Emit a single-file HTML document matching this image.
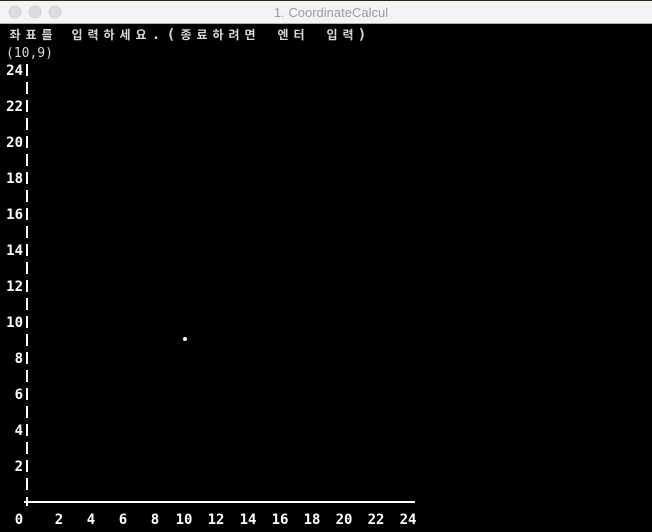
<html><head><style>
body{margin:0;width:652px;height:532px;overflow:hidden;background:#000}
svg{display:block}
</style></head><body>
<svg width="652" height="532" xmlns="http://www.w3.org/2000/svg">
<rect x="0" y="0" width="652" height="532" fill="#000"/>
<rect x="0" y="0" width="652" height="2" fill="#2a2a1a"/>
<rect x="0" y="1" width="652" height="22" fill="#f4f4f4"/>
<rect x="0" y="23" width="652" height="1" fill="#b0b0b0"/>
<circle cx="15" cy="12" r="6" fill="#dcdcdc" stroke="#cacaca" stroke-width="0.8"/>
<circle cx="35" cy="12" r="6" fill="#dcdcdc" stroke="#cacaca" stroke-width="0.8"/>
<circle cx="55" cy="12" r="6" fill="#dcdcdc" stroke="#cacaca" stroke-width="0.8"/>
<text x="331" y="17" font-family="Liberation Sans, sans-serif" font-size="13" fill="#9a9a9a" text-anchor="middle">1. CoordinateCalcul</text>
<g font-family="'DejaVu Sans Mono', 'Noto Sans CJK KR', sans-serif" font-size="12" font-weight="bold" fill="#d8d8d8" text-anchor="middle">
<text x="15" y="39">좌</text><text x="31" y="39">표</text><text x="47" y="39">를</text>
<text x="77" y="39">입</text><text x="93" y="39">력</text><text x="109" y="39">하</text><text x="125" y="39">세</text><text x="141" y="39">요</text><text x="156" y="39" font-size="14">.</text>
<text x="171" y="39" font-size="14">(</text><text x="186" y="39">종</text><text x="202" y="39">료</text><text x="218" y="39">하</text><text x="234" y="39">려</text><text x="250" y="39">면</text>
<text x="283" y="39">엔</text><text x="299" y="39">터</text><text x="332" y="39">입</text><text x="348" y="39">력</text><text x="362" y="39" font-size="14">)</text>
</g>
<text x="6" y="57" font-family="DejaVu Sans Mono, monospace" font-size="13" fill="#d8d8d8">(10,9)</text>
<g fill="#fff">
<rect x="26" y="64" width="2" height="12"/><rect x="26" y="82" width="2" height="12"/><rect x="26" y="100" width="2" height="12"/><rect x="26" y="118" width="2" height="12"/><rect x="26" y="136" width="2" height="12"/><rect x="26" y="154" width="2" height="12"/><rect x="26" y="172" width="2" height="12"/><rect x="26" y="190" width="2" height="12"/><rect x="26" y="208" width="2" height="12"/><rect x="26" y="226" width="2" height="12"/><rect x="26" y="244" width="2" height="12"/><rect x="26" y="262" width="2" height="12"/><rect x="26" y="280" width="2" height="12"/><rect x="26" y="298" width="2" height="12"/><rect x="26" y="316" width="2" height="12"/><rect x="26" y="334" width="2" height="12"/><rect x="26" y="352" width="2" height="12"/><rect x="26" y="370" width="2" height="12"/><rect x="26" y="388" width="2" height="12"/><rect x="26" y="406" width="2" height="12"/><rect x="26" y="424" width="2" height="12"/><rect x="26" y="442" width="2" height="12"/><rect x="26" y="460" width="2" height="12"/><rect x="26" y="478" width="2" height="12"/>
<rect x="24" y="501" width="391" height="2"/><rect x="26" y="497" width="2" height="9"/>
<circle cx="185" cy="339" r="2"/>
</g>
<g font-family="DejaVu Sans Mono, monospace" font-size="14" font-weight="bold" fill="#fff" text-anchor="end">
<text x="23" y="75">24</text><text x="23" y="111">22</text><text x="23" y="147">20</text><text x="23" y="183">18</text><text x="23" y="219">16</text><text x="23" y="255">14</text><text x="23" y="291">12</text><text x="23" y="327">10</text><text x="23" y="363">8</text><text x="23" y="399">6</text><text x="23" y="435">4</text><text x="23" y="471">2</text>
</g>
<g font-family="DejaVu Sans Mono, monospace" font-size="14" font-weight="bold" fill="#fff" text-anchor="middle">
<text x="19" y="524">0</text><text x="59" y="524">2</text><text x="91" y="524">4</text><text x="123" y="524">6</text><text x="155" y="524">8</text><text x="184" y="524">10</text><text x="216" y="524">12</text><text x="248" y="524">14</text><text x="280" y="524">16</text><text x="312" y="524">18</text><text x="344" y="524">20</text><text x="376" y="524">22</text><text x="408" y="524">24</text>
</g>
</svg>
</body></html>
